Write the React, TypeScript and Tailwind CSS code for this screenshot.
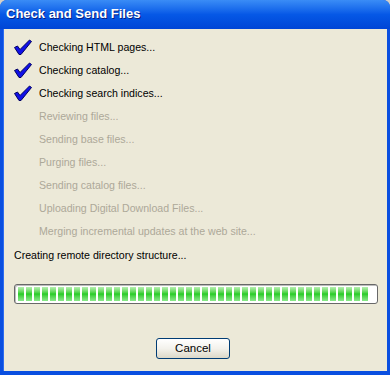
import React from "react";

const done = ["Checking HTML pages...", "Checking catalog...", "Checking search indices..."];
const pending = [
  "Reviewing files...",
  "Sending base files...",
  "Purging files...",
  "Sending catalog files...",
  "Uploading Digital Download Files...",
  "Merging incremental updates at the web site...",
];

const font = { fontFamily: "'Liberation Sans', Arial, sans-serif", fontSize: "10.6px" };

const CheckMark = () => (
  <svg width="20" height="17" viewBox="0 0 20 17" className="shrink-0">
    <path
      d="M1.5 8.5 L4.5 7 L7 10.5 L16.5 1 L18.5 2.5 L8 15.5 L6 15.5 Z"
      fill="#1010e8"
      stroke="#000060"
      strokeWidth="1"
      strokeLinejoin="round"
    />
  </svg>
);

export default function App() {
  return (
    <div className="w-[390px] h-[375px] bg-[#d4d0c8]">
      <div className="flex h-full flex-col overflow-hidden rounded-t-[7px] bg-[#0a4fe0]">
        {/* title bar */}
        <div className="flex h-[29px] shrink-0 items-center bg-gradient-to-b from-[#3a8cf6] via-[#0658e6] to-[#0045d6] pl-[6px] pb-[1px]">
          <span
            className="text-[13px] font-bold text-white [text-shadow:1px_1px_0_#0a1f80]"
            style={{ fontFamily: "'Liberation Sans', Arial, sans-serif" }}
          >
            Check and Send Files
          </span>
        </div>

        <div className="mx-[3px] mb-[4px] flex flex-1 flex-col bg-[#ece9d8] border-l border-[#2d6cf0]">
          <div className="flex flex-col pt-[7px]">
            {done.map((t) => (
              <div key={t} className="flex h-[23px] items-center pl-[9px]">
                <CheckMark />
                <span className="ml-[6px] text-black" style={font}>
                  {t}
                </span>
              </div>
            ))}
            {pending.map((t) => (
              <div key={t} className="flex h-[23px] items-center pl-[35px]">
                <span className="text-[#aca899]" style={font}>
                  {t}
                </span>
              </div>
            ))}
          </div>

          <div className="mt-[1px] flex h-[23px] items-center pl-[10px]">
            <span className="text-black" style={font}>
              Creating remote directory structure...
            </span>
          </div>

          {/* progress bar */}
          <div className="ml-[10px] mt-[17px] flex h-[20px] w-[364px] items-center gap-[2px] rounded-[3px] border border-[#686868] bg-white px-[3px] shadow-[inset_1px_1px_0_#bdbdbd]">
            {Array.from({ length: 44 }).map((_, i) => (
              <div
                key={i}
                className="h-[14px] w-[6px] shrink-0 bg-gradient-to-b from-[#b6f0b0] via-[#22cc22] to-[#8ae88a]"
              />
            ))}
          </div>

          <div className="mt-[34px] flex justify-center pr-[5px]">
            <button
              className="h-[21px] w-[74px] rounded-[3px] border border-[#003c74] bg-gradient-to-b from-white via-[#f3f2ec] to-[#dcd8c8] text-black"
              style={{ ...font, fontSize: "11.5px" }}
            >
              Cancel
            </button>
          </div>
        </div>
      </div>
    </div>
  );
}
